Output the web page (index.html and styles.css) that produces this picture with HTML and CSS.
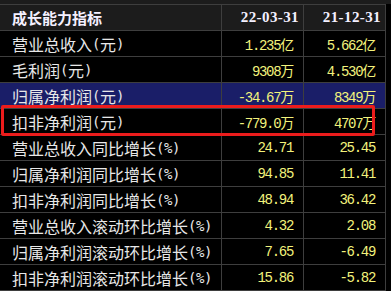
FILE: index.html
```html
<!DOCTYPE html>
<html lang="zh-CN">
<head>
    <meta charset="UTF-8">
    <title>成长能力指标</title>
    <link rel="stylesheet" href="styles.css">
</head>
<body>
    <div class="panel">
        <div class="table">
            <!-- Header -->
            <div class="row head">
                <div class="cell name">成长能力指标</div>
                <div class="cell date">22-03-31</div>
                <div class="cell date">21-12-31</div>
            </div>

            <div class="row">
                <div class="cell name">营业总收入<span class="unit">(</span>元<span class="unit">)</span></div>
                <div class="cell num">1.235亿</div>
                <div class="cell num">5.662亿</div>
            </div>
            <div class="row">
                <div class="cell name">毛利润<span class="unit">(</span>元<span class="unit">)</span></div>
                <div class="cell num">9308万</div>
                <div class="cell num">4.530亿</div>
            </div>
            <div class="row selected">
                <div class="cell name">归属净利润<span class="unit">(</span>元<span class="unit">)</span></div>
                <div class="cell num">-34.67万</div>
                <div class="cell num">8349万</div>
            </div>
            <div class="row">
                <div class="cell name">扣非净利润<span class="unit">(</span>元<span class="unit">)</span></div>
                <div class="cell num">-779.0万</div>
                <div class="cell num">4707万</div>
            </div>
            <div class="row">
                <div class="cell name">营业总收入同比增长<span class="unit">(%)</span></div>
                <div class="cell num">24.71</div>
                <div class="cell num">25.45</div>
            </div>
            <div class="row">
                <div class="cell name">归属净利润同比增长<span class="unit">(%)</span></div>
                <div class="cell num">94.85</div>
                <div class="cell num">11.41</div>
            </div>
            <div class="row">
                <div class="cell name">扣非净利润同比增长<span class="unit">(%)</span></div>
                <div class="cell num">48.94</div>
                <div class="cell num">36.42</div>
            </div>
            <div class="row">
                <div class="cell name">营业总收入滚动环比增长<span class="unit">(%)</span></div>
                <div class="cell num">4.32</div>
                <div class="cell num">2.08</div>
            </div>
            <div class="row">
                <div class="cell name">归属净利润滚动环比增长<span class="unit">(%)</span></div>
                <div class="cell num">7.65</div>
                <div class="cell num">-6.49</div>
            </div>
            <div class="row">
                <div class="cell name">扣非净利润滚动环比增长<span class="unit">(%)</span></div>
                <div class="cell num">15.86</div>
                <div class="cell num">-5.82</div>
            </div>

            <!-- Highlight marker over the 扣非净利润 row -->
            <div class="marker"></div>
        </div>
    </div>
</body>
</html>
```

FILE: styles.css
```css
body {
    margin: 0;
    padding: 0;
    background-color: #000;
    font-family: "Noto Sans CJK SC", sans-serif;
}
.panel {
    padding-top: 4px;
    background: linear-gradient(#1c1c1c 0, #1c1c1c 4px, #000 4px);
    height: 287px;
    overflow: hidden;
}
.table {
    position: relative;
    width: 386px;
}
.row {
    display: grid;
    grid-template-columns: 222px 82px 82px;
    height: 25px;
    border-bottom: 1px solid #3e3e3e;
    background-color: #000;
}
.row.head {
    background-color: #1c1c1c;
    border-top: 1px solid #3e3e3e;
}
.row.selected {
    background-color: #1a1e68;
}
.cell {
    display: flex;
    align-items: center;
    border-right: 1px solid #3e3e3e;
    white-space: nowrap;
    overflow: hidden;
}
.name {
    padding-left: 12px;
    font-size: 16px;
    color: #e8e8e8;
}
.name .unit {
    font-family: "DejaVu Sans Mono", monospace;
    font-size: 14px;
    letter-spacing: -0.43px;
}
.head .name {
    font-size: 15px;
    font-weight: bold;
    color: #f4f0ff;
}
.date {
    justify-content: flex-end;
    padding-right: 4px;
    font-family: "Liberation Serif", serif;
    font-size: 15px;
    font-weight: bold;
    letter-spacing: 0.4px;
    color: #f4f0ff;
}
.num {
    justify-content: flex-end;
    padding-right: 10px;
    font-family: "Liberation Mono", "Noto Sans CJK SC", monospace;
    font-size: 14px;
    letter-spacing: -1.3px;
    color: #f2f27c;
}
.marker {
    position: absolute;
    left: 1px;
    top: 101px;
    width: 368px;
    height: 25px;
    border: 3px solid #ec1c1c;
    border-radius: 2px;
    pointer-events: none;
}
```
